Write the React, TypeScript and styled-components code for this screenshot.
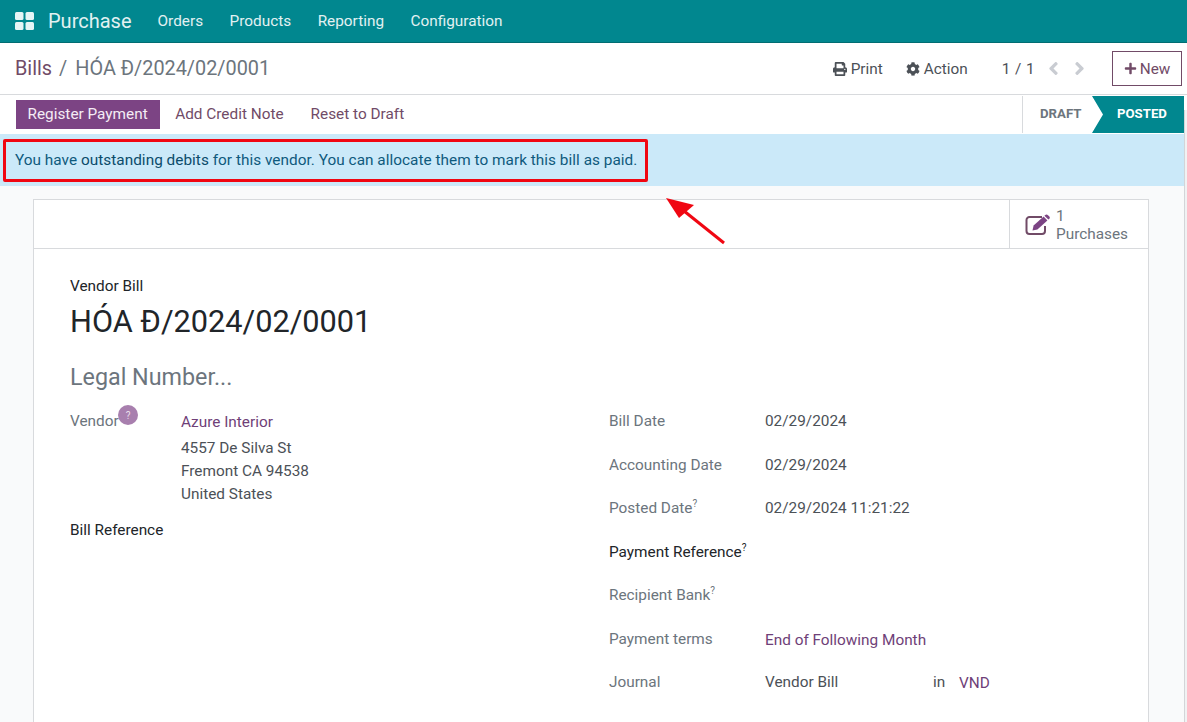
import React from "react";
import styled, { createGlobalStyle } from "styled-components";
import { FaAngleLeft, FaAngleRight, FaCog, FaPlus, FaPrint } from "react-icons/fa";

const Colors = {
  teal: "#01878f",
  tealDark: "#016d72",
  purple: "#714b67",
  link: "#6f3f78",
  purpleStrong: "#7c4484",
  border: "#d8dadd",
  gray: "#6c757d",
  text: "#4c5157",
  dark: "#212529",
  alert: "#cbe9f9",
  alertText: "#0f5a7d",
  red: "#f00712",
};

const GlobalStyle = createGlobalStyle`
  html, body {
    margin: 0;
    height: 100%;
    overflow: hidden;
    background: #f9fafb;
    font-family: Roboto, "Liberation Sans", sans-serif;
    font-size: 15.35px;
    color: ${Colors.text};
  }
  * {
    box-sizing: border-box;
  }
`;

const menus = ["Orders", "Products", "Reporting", "Configuration"];

const AppsIcon = () => (
  <svg width="19" height="18" viewBox="0 0 19 18" fill="#e6f5f6">
    <rect x="0" y="0" width="8.5" height="8" rx="1.5" />
    <rect x="10.5" y="0" width="8.5" height="8" rx="1.5" />
    <rect x="0" y="10" width="8.5" height="8" rx="1.5" />
    <rect x="10.5" y="10" width="8.5" height="8" rx="1.5" />
  </svg>
);

const PurchaseIcon = () => (
  <svg width="26" height="22" viewBox="0 0 26 22" fill="none">
    <path
      d="M17 3 H4.5 a3 3 0 0 0 -3 3 V17 a3 3 0 0 0 3 3 H17 a3 3 0 0 0 3 -3 V12"
      stroke={Colors.purple}
      strokeWidth="2"
    />
    <path d="M7.5 16.5 L8.6 11.6 L18.6 2.6 L22.4 6.4 L12.4 15.4 Z" fill={Colors.purpleStrong} />
    <path d="M20 1.3 Q21.5 0 23 1.2 L24.4 2.6 Q25.5 4 24.2 5 L23.4 5.6 L19.4 1.8 Z" fill={Colors.purpleStrong} />
  </svg>
);

export default function App() {
  return (
    <Page>
      <GlobalStyle />
      <Navbar>
        <AppsIcon />
        <Brand>Purchase</Brand>
        {menus.map((item) => (
          <NavItem key={item}>{item}</NavItem>
        ))}
      </Navbar>

      <ControlPanel>
        <Breadcrumb>
          <BreadcrumbLink>Bills</BreadcrumbLink>
          <BreadcrumbSeparator>/</BreadcrumbSeparator>
          <span>HÓA Đ/2024/02/0001</span>
        </Breadcrumb>
        <PanelActions>
          <PanelAction>
            <FaPrint size={14} />
            Print
          </PanelAction>
          <PanelAction>
            <FaCog size={14} />
            Action
          </PanelAction>
          <Pager>1 / 1</Pager>
          <PagerArrows>
            <FaAngleLeft size={21} />
            <FaAngleRight size={21} />
          </PagerArrows>
          <NewButton>
            <FaPlus size={13} />
            New
          </NewButton>
        </PanelActions>
      </ControlPanel>

      <StatusBar>
        <StatusActions>
          <PrimaryButton>Register Payment</PrimaryButton>
          <LinkButton>Add Credit Note</LinkButton>
          <LinkButton>Reset to Draft</LinkButton>
        </StatusActions>
        <Stages>
          <Stage>DRAFT</Stage>
          <ActiveStage>POSTED</ActiveStage>
        </Stages>
      </StatusBar>

      <Alert>
        <span>
          You have <AlertLink>outstanding debits</AlertLink> for this vendor. You can
          allocate them to mark this bill as paid.
        </span>
        <Highlight />
      </Alert>

      <Content>
        <Arrow width="70" height="56" viewBox="0 0 70 56">
          <path d="M59 46 L19 14" stroke={Colors.red} strokeWidth="3" />
          <path d="M1 1 L29 8 L14 21 Z" fill={Colors.red} />
        </Arrow>
        <Sheet>
          <ButtonBox>
            <StatButton>
              <PurchaseIcon />
              <StatText>
                <span>1</span>
                <span>Purchases</span>
              </StatText>
            </StatButton>
          </ButtonBox>

          <SheetBody>
            <DarkLine>Vendor Bill</DarkLine>
            <BillNumber>HÓA Đ/2024/02/0001</BillNumber>
            <LegalNumber>Legal Number...</LegalNumber>

            <FormColumns>
              <LeftColumn>
                <VendorRow>
                  <VendorLabel>
                    Vendor
                    <HelpBadge>?</HelpBadge>
                  </VendorLabel>
                  <Address>
                    <VendorName>Azure Interior</VendorName>
                    <span>4557 De Silva St</span>
                    <span>Fremont CA 94538</span>
                    <span>United States</span>
                  </Address>
                </VendorRow>
                <BillReference>Bill Reference</BillReference>
              </LeftColumn>

              <RightColumn>
                <Field>
                  <FieldLabel>Bill Date</FieldLabel>
                  <span>02/29/2024</span>
                </Field>
                <Field>
                  <FieldLabel>Accounting Date</FieldLabel>
                  <span>02/29/2024</span>
                </Field>
                <Field>
                  <FieldLabel>
                    Posted Date<Hint>?</Hint>
                  </FieldLabel>
                  <span>02/29/2024 11:21:22</span>
                </Field>
                <Field>
                  <DarkFieldLabel>
                    Payment Reference<Hint>?</Hint>
                  </DarkFieldLabel>
                </Field>
                <Field>
                  <FieldLabel>
                    Recipient Bank<Hint>?</Hint>
                  </FieldLabel>
                </Field>
                <Field>
                  <FieldLabel>Payment terms</FieldLabel>
                  <FieldLink>End of Following Month</FieldLink>
                </Field>
                <Field>
                  <FieldLabel>Journal</FieldLabel>
                  <JournalName>Vendor Bill</JournalName>
                  <JournalIn>in</JournalIn>
                  <FieldLink>VND</FieldLink>
                </Field>
              </RightColumn>
            </FormColumns>
          </SheetBody>
        </Sheet>
        <Scrollbar />
      </Content>
    </Page>
  );
}

const Page = styled.div`
  position: relative;
  height: 722px;
  overflow: hidden;
  display: flex;
  flex-direction: column;
`;

const Navbar = styled.nav`
  height: 43px;
  flex: none;
  display: flex;
  align-items: center;
  padding-left: 15px;
  background: ${Colors.teal};
  border-bottom: 1px solid ${Colors.tealDark};
  color: #e2f1f2;
`;

const Brand = styled.span`
  margin: 0 26px 0 14px;
  font-size: 20px;
`;

const NavItem = styled.span`
  margin-right: 26.5px;
`;

const ControlPanel = styled.div`
  height: 52px;
  flex: none;
  display: flex;
  align-items: center;
  justify-content: space-between;
  padding: 0 5px 0 15px;
  background: white;
  border-bottom: 1px solid ${Colors.border};
`;

const Breadcrumb = styled.div`
  display: flex;
  align-items: center;
  font-size: 19.85px;
  color: ${Colors.gray};
`;

const BreadcrumbLink = styled.span`
  color: ${Colors.purple};
`;

const BreadcrumbSeparator = styled.span`
  margin: 0 8px 0 7px;
`;

const PanelActions = styled.div`
  display: flex;
  align-items: center;
`;

const PanelAction = styled.span`
  display: flex;
  align-items: center;
  gap: 4px;
  margin-right: 23px;
  color: ${Colors.text};
`;

const Pager = styled.span`
  margin-left: 11px;
  margin-right: 8px;
  letter-spacing: 0.4px;
`;

const PagerArrows = styled.span`
  display: flex;
  gap: 5px;
  margin-right: 22px;
  color: #c9ccd2;
`;

const NewButton = styled.button`
  width: 70px;
  height: 35px;
  display: flex;
  align-items: center;
  justify-content: center;
  gap: 3px;
  padding: 0;
  background: white;
  border: 1px solid ${Colors.purple};
  color: ${Colors.purple};
  font: inherit;
`;

const StatusBar = styled.div`
  height: 39px;
  flex: none;
  display: flex;
  align-items: flex-start;
  justify-content: space-between;
  padding: 0 3px 0 16px;
  background: white;
`;

const StatusActions = styled.div`
  display: flex;
  align-items: center;
  margin-top: 5px;
  gap: 3px;
`;

const PrimaryButton = styled.button`
  height: 29px;
  padding: 0 12.5px 2px 11.5px;
  background: ${Colors.purpleStrong};
  border: none;
  color: #f4ecf5;
  font: inherit;
`;

const LinkButton = styled.button`
  height: 29px;
  padding: 0 12px 2px;
  background: none;
  border: none;
  color: ${Colors.purple};
  font: inherit;
`;

const Stages = styled.div`
  display: flex;
  height: 37px;
  margin-top: 1px;
  font-size: 13.2px;
  font-weight: 700;
`;

const Stage = styled.div`
  width: 70px;
  display: flex;
  align-items: center;
  padding: 0 0 2px 17px;
  border-left: 1px solid ${Colors.border};
  color: ${Colors.gray};
`;

const ActiveStage = styled.div`
  width: 92px;
  display: flex;
  align-items: center;
  padding: 0 0 2px 25px;
  background: ${Colors.teal};
  color: white;
  clip-path: polygon(0 0, 100% 0, 100% 100%, 0 100%, 11px 50%);
`;

const Alert = styled.div`
  position: relative;
  height: 52px;
  flex: none;
  display: flex;
  align-items: center;
  margin-right: 3px;
  padding-left: 15px;
  background: ${Colors.alert};
  color: ${Colors.alertText};
  letter-spacing: 0.03px;
`;

const AlertLink = styled.span`
  color: #0b4c6b;
`;

const Highlight = styled.div`
  position: absolute;
  left: 3px;
  top: 5px;
  width: 645px;
  height: 43px;
  border: 3px solid ${Colors.red};
  border-radius: 2px;
`;

const Content = styled.div`
  flex: 1;
  padding: 13px 38px 0 33px;
`;

const Arrow = styled.svg`
  position: absolute;
  left: 665px;
  top: 197px;
  z-index: 1;
`;

const Scrollbar = styled.div`
  position: absolute;
  right: 0;
  top: 110px;
  bottom: 0;
  width: 3px;
  background: #f1f2f3;
  border-left: 1px solid #d3d5d8;
`;

const Sheet = styled.div`
  background: white;
  border: 1px solid ${Colors.border};
  height: 560px;
`;

const ButtonBox = styled.div`
  height: 49px;
  display: flex;
  justify-content: flex-end;
  border-bottom: 1px solid ${Colors.border};
`;

const StatButton = styled.div`
  width: 139px;
  display: flex;
  align-items: center;
  gap: 5px;
  padding: 2px 0 0 15px;
  border-left: 1px solid ${Colors.border};
`;

const StatText = styled.div`
  display: flex;
  flex-direction: column;
  line-height: 18px;
  color: ${Colors.gray};
`;

const SheetBody = styled.div`
  padding: 28px 36px 0;
`;

const DarkLine = styled.div`
  color: ${Colors.dark};
  line-height: 18px;
`;

const BillNumber = styled.h1`
  margin: 5px 0 0;
  font-size: 30.7px;
  line-height: 44px;
  font-weight: 400;
  color: ${Colors.dark};
`;

const LegalNumber = styled.div`
  margin-top: 17px;
  font-size: 23.3px;
  line-height: 32px;
  color: ${Colors.gray};
`;

const FormColumns = styled.div`
  display: flex;
  margin-top: 17px;
`;

const LeftColumn = styled.div`
  width: 539px;
  flex: none;
`;

const VendorRow = styled.div`
  display: flex;
`;

const VendorLabel = styled.div`
  position: relative;
  width: 111px;
  flex: none;
  line-height: 23px;
  color: ${Colors.gray};
`;

const HelpBadge = styled.span`
  position: absolute;
  left: 48px;
  top: -5px;
  width: 20px;
  height: 20px;
  display: flex;
  align-items: center;
  justify-content: center;
  border-radius: 50%;
  background: #a87fae;
  color: #eadfeb;
  font-size: 10px;
`;

const Address = styled.div`
  display: flex;
  flex-direction: column;
  line-height: 23px;
  padding-top: 1px;
`;

const VendorName = styled.span`
  margin-bottom: 3px;
  color: ${Colors.link};
`;

const BillReference = styled.div`
  margin-top: 13px;
  color: ${Colors.dark};
  line-height: 23px;
`;

const RightColumn = styled.div`
  flex: 1;
  display: flex;
  flex-direction: column;
`;

const Field = styled.div`
  height: 43.5px;
  display: flex;
  align-items: flex-start;
  line-height: 23px;
`;

const FieldLabel = styled.div`
  width: 156px;
  flex: none;
  color: ${Colors.gray};
`;

const DarkFieldLabel = styled(FieldLabel)`
  color: ${Colors.dark};
`;

const FieldLink = styled.span`
  margin-top: 1px;
  color: ${Colors.link};
`;

const Hint = styled.sup`
  font-size: 10px;
  line-height: 0;
`;

const JournalName = styled.span`
  width: 168px;
`;

const JournalIn = styled.span`
  width: 26px;
`;
